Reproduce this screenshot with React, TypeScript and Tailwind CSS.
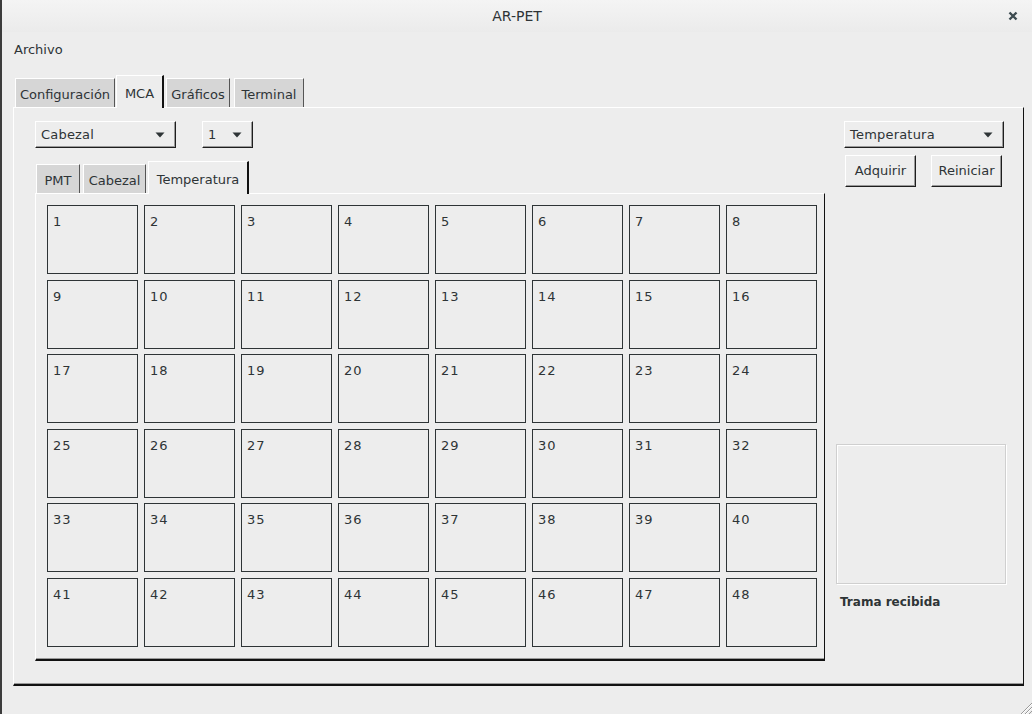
import React from 'react';

const font = { fontFamily: '"DejaVu Sans", "Noto Sans", sans-serif' };

const Arrow: React.FC = () => (
  <svg width="10" height="6" viewBox="0 0 10 6" className="shrink-0">
    <path d="M0.5 0.5 L9.5 0.5 L5 5.5 Z" fill="#2e3436" />
  </svg>
);

const Combo: React.FC<{ label: string; w: string }> = ({ label, w }) => (
  <div
    className={`${w} h-[27px] flex items-center justify-between pl-[5px] pr-[10px] bg-[#ededed] border-t border-l border-white border-r border-b border-r-[#1e1e1e] border-b-[#1e1e1e] shadow-[inset_-1px_-1px_0_#9a9a9a] text-[13px] text-[#2e3436] tracking-[0.2px]`}
  >
    <span>{label}</span>
    <Arrow />
  </div>
);

const Button: React.FC<{ label: string }> = ({ label }) => (
  <div className="w-[71px] h-[32px] flex items-center justify-center bg-[#ededed] border-t border-l border-white border-r border-b border-r-[#1e1e1e] border-b-[#1e1e1e] shadow-[inset_-1px_-1px_0_#9a9a9a] text-[13px] text-[#2e3436]">
    {label}
  </div>
);

const Tab: React.FC<{ label: string; active?: boolean; w: string }> = ({ label, active, w }) =>
  active ? (
    <div
      className={`${w} h-[33px] -mb-px pt-[3px] flex items-center justify-center bg-[#ededed] border-t border-l border-white border-r-2 border-r-[#111] text-[13px] text-[#2e3436] z-10`}
    >
      {label}
    </div>
  ) : (
    <div
      className={`${w} h-[29px] pt-[3px] flex items-center justify-center bg-[#d6d6d6] border-t border-l border-white border-r border-r-[#555] text-[13px] text-[#2e3436]`}
    >
      {label}
    </div>
  );

export default function App() {
  const cells = Array.from({ length: 48 }, (_, i) => i + 1);
  return (
    <div
      className="w-[1032px] h-[714px] bg-[#ededed] relative overflow-hidden border-l-2 border-[#3c3c3c]"
      style={font}
    >
      {/* title bar */}
      <div className="h-[32px] flex items-center justify-center bg-gradient-to-b from-[#f4f4f4] to-[#ebebeb] relative">
        <span className="text-[14px] text-[#2e3436]">AR-PET</span>
        <svg
          width="10"
          height="10"
          viewBox="0 0 10 10"
          className="absolute right-[14px] top-[11px]"
        >
          <path d="M1.5 1.5 L8.5 8.5 M8.5 1.5 L1.5 8.5" stroke="#3d4b50" strokeWidth="2.4" />
        </svg>
      </div>

      {/* menu */}
      <div className="h-[34px] pt-[2px] flex items-center pl-[12px] text-[13px] text-[#2e3436]">Archivo</div>

      {/* outer tabs */}
      <div className="ml-[13px] mt-[10px] flex items-end h-[31px]">
        <Tab label="Configuración" w="w-[100px]" />
        <div className="w-[1px]" />
        <Tab label="MCA" active w="w-[48px]" />
        <div className="w-[2px]" />
        <Tab label="Gráficos" w="w-[64px]" />
        <div className="w-[4px]" />
        <Tab label="Terminal" w="w-[70px]" />
      </div>

      {/* outer panel */}
      <div className="ml-[11px] w-[1011px] h-[579px] border-t border-l border-white border-r border-r-[#111] border-b-2 border-b-[#111] shadow-[inset_0_-1px_0_#9a9a9a] flex pt-[13px] pl-[21px]">
        {/* left column */}
        <div className="w-[790px] flex flex-col">
          <div className="flex gap-[26px]">
            <Combo label="Cabezal" w="w-[141px]" />
            <Combo label="1" w="w-[51px]" />
          </div>

          <div className="mt-[13px] flex items-end h-[32px] pl-[1px]">
            <Tab label="PMT" w="w-[44px]" />
            <div className="w-[3px]" />
            <Tab label="Cabezal" w="w-[63px]" />
            <div className="w-[2px]" />
            <Tab label="Temperatura" active w="w-[101px]" />
          </div>

          <div className="w-[790px] h-[468px] border-t border-l border-white border-r border-r-[#111] border-b-2 border-b-[#111] shadow-[inset_0_-1px_0_#9a9a9a] pt-[11px] pl-[11px]">
            <div className="grid grid-cols-[repeat(8,91px)] gap-x-[6px] gap-y-[5.6px]">
              {cells.map((n) => (
                <div
                  key={n}
                  className="h-[69px] border border-[#2e3436] pl-[5px] pt-[8px] text-[13px] leading-[16px] text-[#2e3436] tracking-[1px]"
                >
                  {n}
                </div>
              ))}
            </div>
          </div>
        </div>

        {/* right column */}
        <div className="ml-[11px] w-[170px] flex flex-col">
          <div className="ml-[8px]">
            <Combo label="Temperatura" w="w-[160px]" />
          </div>
          <div className="ml-[9px] mt-[7px] flex gap-[15px]">
            <Button label="Adquirir" />
            <Button label="Reiniciar" />
          </div>
          <div className="mt-[257px] w-[170px] h-[140px] border border-[#cfcfcf] shadow-[inset_1px_1px_0_#fff,1px_1px_0_#fff]" />
          <div className="mt-[9px] ml-[4px] text-[12px] font-bold text-[#2e3436]">Trama recibida</div>
        </div>
      </div>

      {/* resize grip */}
      <svg width="14" height="14" viewBox="0 0 14 14" className="absolute right-0 bottom-0">
        <path d="M14 3 L3 14 M14 7 L7 14 M14 11 L11 14" stroke="#9a9a9a" strokeWidth="1" />
        <path d="M14 4 L4 14 M14 8 L8 14" stroke="#ffffff" strokeWidth="1" />
      </svg>
    </div>
  );
}
